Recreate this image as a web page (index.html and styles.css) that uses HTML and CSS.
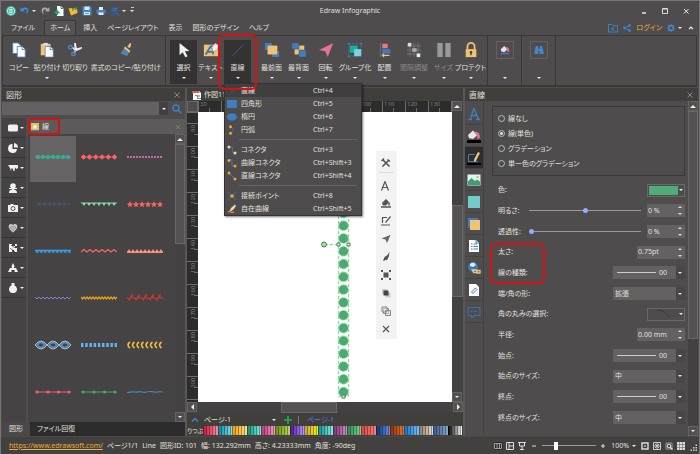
FILE: index.html
```html
<!DOCTYPE html>
<html lang="ja">
<head>
<meta charset="utf-8">
<meta name="viewport" content="width=device-width, initial-scale=1">
<title>Edraw Infographic</title>
<link rel="stylesheet" href="styles.css">
</head>
<body>
<svg width="0" height="0" class="defs" aria-hidden="true">
  <defs>
    <symbol id="undo" viewBox="0 0 10 10"><path d="M.5 1v4.500h4.500L3.500 4C6 2.600 8 4.500 6 8.500 9.500 6 9 1.200 5 1.500 3.800 1.600 2.900 2 2.100 2.700z"/></symbol>
    <symbol id="paint" viewBox="0 0 14 14"><path d="M1 6 6 1.500l4.500 4.500L6 10 2 9z" fill="#e6e6e6"/><path d="M7 3c4-1 6 1 6 6l-2.500 1-1-4z" fill="#e36f94"/></symbol>
    <symbol id="docs" viewBox="0 0 18 18"><path d="M2 1h6l3 3v9H2z" fill="#fff" stroke="#4a7fb5"/><path d="M7 5h6l3 3v9H7z" fill="#fff" stroke="#4a7fb5"/><path d="M12.500 5v3.500H16" fill="none" stroke="#4a7fb5"/></symbol>
  </defs>
</svg>
<div class="app">
  <header class="titlebar">
    <div class="quick">
      <svg class="i10" viewBox="0 0 10 10"><circle cx="5" cy="5" r="5" fill="#3fb5a9"/><circle cx="5" cy="5" r="3.600" fill="none" stroke="#d6f3ef" stroke-width=".8"/><path d="M3 5h4M3.400 3.500h3M3.400 6.500h3" stroke="#fff" stroke-width=".8"/></svg>
      <button aria-label="元に戻す" class="withcaret"><svg class="i10" fill="#3f8ad0"><use href="#undo"/></svg><i class="caret"></i></button>
      <button aria-label="やり直し"><svg class="i10 flip" fill="#a9a9a9"><use href="#undo"/></svg></button>
      <button aria-label="新規"><svg class="i10" viewBox="0 0 10 10"><path d="M3 0h4l2.500 2.500V10H3z" fill="#fff"/><path d="M7 0v2.500h2.500" fill="none" stroke="#3b78b5"/><path d="M.5 6.500h5M3 4v5" stroke="#16a765" stroke-width="1.800"/></svg></button>
      <button aria-label="開く"><svg class="i10" viewBox="0 0 10 10"><path d="M.5 2.500 4 2l1 1.500L9 2 9.500 7 3 9.500z" fill="#f2b93b"/><path d="M4 5c0-3 2-4 3.500-3L8 .500l1.500 3-3 .5.500-1c-1-.3-2 .5-2 2z" fill="#3aa655"/></svg></button>
      <button aria-label="保存"><svg class="i10" viewBox="0 0 10 10"><path d="M.5.500h9v9h-9z" fill="#3f86cc"/><path d="M2.500.500h5v3.500h-5zM2 6h6v3H2z" fill="#dbe8f4"/><path d="M3 7.500h4" stroke="#3f86cc" stroke-width=".8"/></svg></button>
      <button aria-label="印刷"><svg class="i10" viewBox="0 0 10 10"><path d="M.5 3.500h9v4h-9z" fill="#3f86cc"/><path d="M3 1h4v3H3zM2.500 6.500h5V9h-5z" fill="#e4edf6"/></svg></button>
      <button aria-label="エクスポート" class="withcaret"><svg class="i10" viewBox="0 0 10 10"><path d="M1 .500h7.500V6H6v3.500H1z" fill="#36597f"/><path d="M2.500 2.500h4.500M2.500 4.500h4.500" stroke="#5277a0" stroke-width=".7"/><path d="m6.500 7 2.500 2.500" stroke="#4c83be"/></svg><i class="caret"></i></button>
      <button aria-label="カスタマイズ"><i class="caret capped"></i></button>
    </div>
    <h1>Edraw Infographic</h1>
    <div class="winbtns">
      <button aria-label="最小化"><svg class="i8" viewBox="0 0 8 8"><path d="M2 6h4" stroke="#eee" stroke-width="1.400"/></svg></button>
      <button aria-label="最大化"><svg class="i8" viewBox="0 0 8 8"><path d="M1.500 1.500h5v5h-5zM1.500 2h5" fill="none" stroke="#ddd"/></svg></button>
      <button aria-label="閉じる"><svg class="i8" viewBox="0 0 8 8"><path d="m2 2 4.500 4.500m0-4.500L2 6.500" stroke="#eee"/></svg></button>
    </div>
  </header>

  <div class="menubar">
    <nav>
      <a href="#">ファイル</a><a href="#" class="on">ホーム</a><a href="#">挿入</a><a href="#">ページレイアウト</a><a href="#">表示</a><a href="#">図形のデザイン</a><a href="#">ヘルプ</a>
    </nav>
    <div class="account">
      <svg class="i10" viewBox="0 0 10 10" fill="none" stroke="#3f7fc4"><path d="M.5 1.500h3.500l1 1h4.500V9h-9z"/><path d="M6.500 4 3.500 6l3 1.500"/></svg>
      <svg class="i8" viewBox="0 0 8 8" fill="#3f7fc4"><circle cx="1.500" cy="4" r="1.400"/><circle cx="6.500" cy="1.500" r="1.400"/><circle cx="6.500" cy="6.500" r="1.400"/><path d="M6.500 1.500 1.500 4l5 2.500" fill="none" stroke="#3f7fc4"/></svg>
      <a href="#">ログイン</a>
      <button class="withcaret" aria-label="設定"><svg class="i8" viewBox="0 0 8 8"><circle cx="4" cy="4" r="2.300" fill="none" stroke="#3f86cf" stroke-width="1.500"/><path d="M4 0v1.500M4 6.500V8M0 4h1.500M6.500 4H8M1.200 1.200l1 1M5.800 5.800l1 1M1.200 6.800l1-1M5.800 2.200l1-1" stroke="#3f86cf" stroke-width="1.200"/></svg><i class="caret"></i></button>
      <button aria-label="リボンを折りたたむ"><svg class="i8" viewBox="0 0 8 8"><path d="m2 5 2-2 2 2" fill="none" stroke="#eee" stroke-width="1.200"/></svg></button>
    </div>
  </div>

  <div class="ribbon">
    <div class="group">
      <button class="tool"><svg viewBox="0 0 18 18"><use href="#docs"/></svg><span>コピー</span></button>
      <button class="tool"><svg viewBox="0 0 18 18"><path d="M2 2h11v13H2z" fill="#efc375"/><path d="M5 1h5v3H5z" fill="#ddd"/><path d="M7 5h6l3 3v9H7z" fill="#fff" stroke="#4a7fb5" stroke-width=".8"/><path d="M12.500 5v3.500H16" fill="none" stroke="#4a7fb5"/></svg><span>貼り付け</span><i class="caret"></i></button>
      <button class="tool"><svg viewBox="0 0 18 18"><path d="m8 1 2 0 1 6 6-1.500-.5 2L11 10 8.500 9z" fill="#eee"/><path d="m9 9-3-3M9.500 9.500 8 13" stroke="#eee" stroke-width="1.500"/><circle cx="3.800" cy="6" r="2" fill="none" stroke="#4a86c2" stroke-width="1.600"/><circle cx="7.300" cy="13.500" r="2" fill="none" stroke="#4a86c2" stroke-width="1.600"/></svg><span>切り取り</span></button>
      <button class="tool brush"><svg viewBox="0 0 18 18"><path d="m13.500 1 1.500 1-1.500 5-3-2z" fill="#efc375"/><path d="m8 5 6 5-1.500 2L6.500 7z" fill="#efc375"/><path d="m6 7.500 6.500 5L10 16c-3-2-5-3-7.500-2.500C4.500 12 5 10 6 7.500z" fill="#4a86c2"/></svg><span>書式のコピー/貼り付け</span></button>
    </div>
    <div class="group main">
      <button class="tool on"><svg viewBox="0 0 18 18"><path d="m4 1 11 9-5 .5 3 5.500-2.500 1.200-3-5.700L4 15z" fill="#f0f0f0"/></svg><span>選択</span><i class="caret"></i></button>
      <button class="tool"><svg viewBox="0 0 18 18"><path d="M1 3h16v13H1z" fill="#efc375"/><path d="M3 14 8.500 5h2l1 9M5 11h6" fill="none" stroke="#3a74b3" stroke-width="2"/><path d="m10 6 4-5 3 3-1 5-5 2z" fill="#eee" stroke="#777" stroke-width=".5"/></svg><span>テキスト</span><i class="caret"></i></button>
      <div class="drop">
        <button class="tool on" aria-expanded="true"><svg viewBox="0 0 18 18"><path d="M3 15.500 15 3" stroke="#35689c" stroke-width="1"/></svg><span>直線</span><i class="caret"></i></button>
        <ul class="menu">
          <li><button class="hot"><svg viewBox="0 0 10 10"><path d="M1.500 9 8.500 2" stroke="#3c6088"/></svg><span>直線</span><kbd>Ctrl+4</kbd></button></li>
          <li><button><svg viewBox="0 0 10 10"><path d="M0 1h10v8H0z" fill="#3f7dbf"/></svg><span>四角形</span><kbd>Ctrl+5</kbd></button></li>
          <li><button><svg viewBox="0 0 10 10"><ellipse cx="5" cy="5" rx="5" ry="3.800" fill="#3f7dbf"/></svg><span>楕円</span><kbd>Ctrl+6</kbd></button></li>
          <li><button><svg viewBox="0 0 10 10"><path d="M3.500 1.500q6 3.500 0 7" fill="none" stroke="#3f6da3"/><circle cx="3.500" cy="1.800" r="1.500" fill="#f5a623"/><circle cx="3.500" cy="8.200" r="1.500" fill="#f5a623"/></svg><span>円弧</span><kbd>Ctrl+7</kbd></button></li>
          <li class="sep"><button><svg viewBox="0 0 10 10"><path d="M2 2h3.500v6H8" fill="none" stroke="#3f6da3"/><circle cx="2" cy="2" r="1.500" fill="#f7d9a0"/><circle cx="8" cy="8" r="1.500" fill="#f7d9a0"/></svg><span>コネクタ</span><kbd>Ctrl+3</kbd></button></li>
          <li><button><svg viewBox="0 0 10 10"><path d="M2 2C9-1 1 11 8 8" fill="none" stroke="#3f7dbf"/><circle cx="2" cy="2.500" r="1.500" fill="#f5a623"/><circle cx="8" cy="8" r="1.500" fill="#f5a623"/></svg><span>曲線コネクタ</span><kbd>Ctrl+Shift+3</kbd></button></li>
          <li><button><svg viewBox="0 0 10 10"><path d="m2 2 6 6" stroke="#3f7dbf"/><circle cx="2" cy="2" r="1.500" fill="#f5a623"/><circle cx="8" cy="8" r="1.500" fill="#f5a623"/></svg><span>直線コネクタ</span><kbd>Ctrl+Shift+4</kbd></button></li>
          <li class="sep"><button><svg viewBox="0 0 10 10"><path d="m1 1 8 8M9 1 1 9" stroke="#3f6da3"/><circle cx="5" cy="5" r="1.800" fill="#f5a623"/></svg><span>接続ポイント</span><kbd>Ctrl+8</kbd></button></li>
          <li><button><svg viewBox="0 0 10 10"><path d="m2 8 2-4 4-3.500L9 2 6 6z" fill="#efd9a8"/><path d="M1 8c2-2 3 2 6 0" fill="none" stroke="#e8923a" stroke-width="1.200"/></svg><span>自在曲線</span><kbd>Ctrl+Shift+5</kbd></button></li>
        </ul>
        <div class="mark mark-tool"></div>
      </div>
      <div class="tools">
      <button class="tool"><svg viewBox="0 0 18 18"><path d="M1 1h8v8H1zM9 10h8v7H9z" fill="#3f7dbf"/><path d="M4 4h11v10H4z" fill="#efc375"/></svg><span>最前面</span><i class="caret"></i></button>
      <button class="tool"><svg viewBox="0 0 18 18"><path d="M4 4h11v10H4z" fill="#efc375"/><path d="M1 1h8v7H1zM9 9h8v8H9z" fill="#3f7dbf" stroke="#4e4c4c" stroke-width=".6"/></svg><span>最背面</span><i class="caret"></i></button>
      <button class="tool"><svg viewBox="0 0 18 18"><path d="M17 1.500 1 9l7 1.500 3 6.500z" fill="#e27396"/></svg><span>回転</span><i class="caret"></i></button>
      <button class="tool wide"><svg viewBox="0 0 18 18"><path d="M2 2h14v14H2z" fill="none" stroke="#3f7dbf" stroke-dasharray="2 2"/><path d="M3 4h9v8H3z" fill="#14b494"/><path d="M8 8h8v8H8z" fill="#7fd0e6"/><circle cx="16" cy="2" r="1.200" fill="#3f7dbf"/><circle cx="2" cy="2" r="1.200" fill="#3f7dbf"/><circle cx="2" cy="16" r="1.200" fill="#3f7dbf"/></svg><span>グループ化</span><i class="caret"></i></button>
      <button class="tool"><svg viewBox="0 0 18 18"><path d="M4 1v16" stroke="#3f7dbf"/><path d="M6 2h6v5H6z" fill="#ee7886"/><path d="M6 8h9v5H6z" fill="#3f7dbf"/><path d="M14 15H6m2-2-2 2 2 2" fill="none" stroke="#efc375" stroke-width="1.300"/></svg><span>配置</span><i class="caret"></i></button>
      <button class="tool wide dim"><svg viewBox="0 0 18 18"><path d="M4.500 1v16M9 1v16M13.500 1v16M1 4.500h16M1 9h16M1 13.500h16" stroke="#777"/><path d="M2 1h4v4H2z" fill="#ddd"/><path d="M7 7h5v4H7z" fill="#aaa"/><path d="M12 13h4v4h-4z" fill="#eee"/></svg><span>間隔調整</span><i class="caret"></i></button>
      <button class="tool dim"><svg viewBox="0 0 18 18"><path d="M1.500 1h6v16h-6zM10.500 1h6v16h-6z" fill="#9a9a9a"/></svg><span>サイズ</span><i class="caret"></i></button>
      <button class="tool"><svg viewBox="0 0 18 18"><path d="M5 8V5a4 4 0 0 1 8 0v3" fill="none" stroke="#efc375" stroke-width="2"/><path d="M3 8h12v9H3z" fill="#efc375"/><circle cx="9" cy="11.500" r="1.400" fill="#4a3a20"/><path d="M9 12v3" stroke="#4a3a20" stroke-width="1.400"/></svg><span>プロテクト</span><i class="caret"></i></button>
      </div>
    </div>
    <div class="group small"><button class="tool" aria-label="塗りつぶし"><span class="boxed"><svg class="i10" viewBox="0 0 14 14"><use href="#paint"/><path d="M1 11h12v2H1z" fill="#3f7dbf"/></svg></span><i class="caret"></i></button></div>
    <div class="group small"><button class="tool" aria-label="検索と置換"><span class="boxed"><svg class="i10" viewBox="0 0 10 10" fill="#3f86cf"><path d="M2 1h2l.5 2v6H.5V6zM6 1h2l1.500 5v3h-4V3z"/><path d="M4 4h2v2H4z"/></svg></span><i class="caret"></i></button></div>
  </div>

  <main>
    <section class="left">
      <div class="phead"><h2>図形</h2><button aria-label="閉じる"><svg class="i8" viewBox="0 0 8 8"><path d="m1.500 1.500 5 5m0-5-5 5" stroke="#8a8886"/></svg></button></div>
      <div class="search"><input type="text" aria-label="図形を検索"><button class="pick" aria-label="履歴"><i class="caret"></i></button><button aria-label="検索"><svg class="i10" viewBox="0 0 10 10" fill="none" stroke="#3f7fc4" stroke-width="1.400"><circle cx="4" cy="4" r="3"/><path d="m6.200 6.200 3 3"/></svg></button></div>
      <div class="lib">
        <div class="cats">
          <button aria-label="基本"><svg viewBox="0 0 10 10"><rect y="1.500" width="10" height="7" rx="1.500"/></svg><i class="caret"></i></button>
          <button aria-label="グラフ"><svg viewBox="0 0 10 10"><path d="M4.500 1v5H9A4.500 4.500 0 1 1 4.500 1z"/><path d="M6 0a4.200 4.200 0 0 1 4 4.500H6z"/></svg><i class="caret"></i></button>
          <button aria-label="地図"><svg viewBox="0 0 10 10"><path d="M0 2h10v3L8.500 6 7 4.500 6.500 8H5.500L5 6 3.500 5 3 8 2 5z"/></svg><i class="caret"></i></button>
          <button aria-label="人物"><svg viewBox="0 0 10 10"><circle cx="5" cy="3" r="2.800"/><path d="M1 10c0-3 2-3 3-3.500V5h2v1.500c1 .5 3 .5 3 3.500zM1 5h8v1H1z"/></svg><i class="caret"></i></button>
          <button aria-label="カメラ"><svg viewBox="0 0 10 10"><path d="M0 2h2l1-1h2l1 1h4v7H0z"/><circle cx="5" cy="5.500" r="2" fill="none" stroke="#555"/></svg><i class="caret"></i></button>
          <button aria-label="健康"><svg viewBox="0 0 10 10"><path d="M5 9.500C-3 4 2-1 5 2c3-3 8 2 0 7.500z" fill="#ccc"/><path d="M5 7.500C1 4.500 3 2.500 5 4.200 7 2.500 9 4.500 5 7.500z" fill="none" stroke="#666" stroke-width=".7"/></svg><i class="caret"></i></button>
          <button aria-label="装飾"><svg viewBox="0 0 10 10"><path d="M1 1h3v2h3v2h2v4H6V7H4v2H1z"/><path d="m2 5 5 4M3 2l4 3" stroke="#444" stroke-width=".7"/><path d="M7 1h2v2H7z"/></svg><i class="caret"></i></button>
          <button aria-label="自然"><svg viewBox="0 0 10 10"><path d="m5 0 1.500 3L6 5h2l2 4H6.500V7h-3v2H0l2-4h2l-.5-2z"/></svg><i class="caret"></i></button>
          <button aria-label="その他"><svg viewBox="0 0 10 10"><path d="M3.500 0h3v2.500a4 4 0 1 1-3 0z"/></svg><i class="caret"></i></button>
        </div>
        <div class="shelf">
          <div class="shead">
            <svg class="i8" viewBox="0 0 8 8"><path d="M0 0h8v8H0z" fill="#efb75c"/><path d="M0 7h8v1H0z" fill="#3f7dbf"/><path d="m4 1 .7 1.700 1.800.2-1.300 1.200.4 1.900L4 5l-1.600 1 .4-1.900-1.300-1.200 1.800-.2z" fill="#fff"/></svg>
            <span>線</span>
            <button aria-label="閉じる"><svg class="i8" viewBox="0 0 8 8"><path d="m2 2 4 4m0-4L2 6" stroke="#7d7b7a"/></svg></button>
            <div class="mark mark-line"></div>
          </div>
          <div class="shelfbody">
            <div class="shapes">
              <button class="sel" aria-label="線 1"><svg viewBox="0 0 36 10"><g fill="#3da898"><path d="M0 4.500h36v1H0z"/><circle cx="3" cy="5" r="2.200"/><circle cx="8" cy="5" r="2.200"/><circle cx="13" cy="5" r="2.200"/><circle cx="18" cy="5" r="2.200"/><circle cx="23" cy="5" r="2.200"/><circle cx="28" cy="5" r="2.200"/><circle cx="33" cy="5" r="2.200"/></g></svg></button>
              <button aria-label="線 2"><svg viewBox="0 0 36 10"><path d="M1 5h34" stroke="#ff6464" stroke-width=".8"/><path d="m0 5 2.500-2.500L5 5 2.500 7.500zM6 5l2.500-2.500L11 5 8.500 7.500zM12.300 5l2.500-2.500L17.300 5l-2.500 2.500zM18.500 5 21 2.500 23.500 5 21 7.500zM24.800 5l2.500-2.500L29.800 5l-2.500 2.500zM31 5l2.500-2.500L36 5l-2.500 2.500z" fill="#ff6464" stroke="#ff6464" stroke-width=".5"/></svg></button>
              <button aria-label="線 3"><svg viewBox="0 0 36 10"><path d="M0 5h36" stroke="#c667b4" stroke-width="1.800" stroke-dasharray="2 1"/></svg></button>
              <button aria-label="線 4"><svg viewBox="0 0 36 10"><path d="M1 5h34" stroke="#44546e" stroke-width=".8"/><path d="M3 5h31" stroke="#44546e" stroke-width="3" stroke-dasharray="3 2"/></svg></button>
              <button aria-label="線 5"><svg viewBox="0 0 36 10"><path d="M0 3.500h36v1H0zM1 4h4L3 7zM6 4h4L8 7zM11 4h4l-2 3zM16 4h4l-2 3zM21 4h4l-2 3zM26 4h4l-2 3zM31 4h4l-2 3z" fill="#86e0a8"/></svg></button>
              <button aria-label="線 6"><svg viewBox="0 0 36 10"><defs><path id="st" d="m3 2 .9 2.200 2.300.2-1.800 1.500.6 2.300L3 7 1 8.200l.6-2.300L-.200 4.400l2.300-.2z"/></defs><g fill="#ff6464"><use href="#st"/><use href="#st" x="6"/><use href="#st" x="12"/><use href="#st" x="18"/><use href="#st" x="24"/><use href="#st" x="30"/></g></svg></button>
              <button aria-label="線 7"><svg viewBox="0 0 36 10"><path d="M0 4.500h36" stroke="#379ff0" stroke-width="1.600"/><path d="M1 6h35" stroke="#379ff0" stroke-width="1.600" stroke-dasharray="2.500 1.500"/></svg></button>
              <button aria-label="線 8"><svg viewBox="0 0 36 10"><path d="m0 6 3-2.500 3 2.500 3-2.500 3 2.500 3-2.500 3 2.500 3-2.500 3 2.500 3-2.500 3 2.500 3-2.500 3 2.500" fill="none" stroke="#ff6464" stroke-width="1.300"/></svg></button>
              <button aria-label="線 9"><svg viewBox="0 0 36 10"><path d="M0 5.500h36V7H0zM0 6l2-3 2 3 2-3 2 3 2-3 2 3 2-3 2 3 2-3 2 3 2-3 2 3 2-3 2 3 2-3 2 3 2-3 2 3z" fill="#f59478"/></svg></button>
              <button aria-label="線 10"><svg viewBox="0 0 36 10"><path d="m0 4 2 2 2-2 2 2 2-2 2 2 2-2 2 2 2-2 2 2 2-2 2 2 2-2 2 2 2-2 2 2 2-2 2 2 2-2" fill="none" stroke="#9a78d8"/></svg></button>
              <button aria-label="線 11"><svg viewBox="0 0 36 10"><path d="m0 4 1.500 2L3 4l1.500 2L6 4l1.500 2L9 4l1.500 2L12 4l1.500 2L15 4l1.500 2L18 4l1.500 2L21 4l1.500 2L24 4l1.500 2L27 4l1.500 2L30 4l1.500 2L33 4l1.500 2L36 4" fill="none" stroke="#e7a21a" stroke-width="1.300"/></svg></button>
              <button aria-label="線 12"><svg viewBox="0 0 36 10"><path d="M0 5h1l1 2 3-5v3h3l1 2 3-5v3h3l1 2 3-5v3h3l1 2 3-5v3h3l1 2 3-5v3h3" fill="none" stroke="#d8373b" stroke-width="1.100"/></svg></button>
              <button aria-label="線 13"><svg viewBox="0 0 36 10"><defs><g id="eye"><path d="M0 5q6-8 12 0-6 8-12 0z" fill="#56799c" stroke="#a8bccf"/><ellipse cx="6" cy="5" rx="3" ry="2.200" fill="#274b70" stroke="#8fa9c1" stroke-width=".8"/></g></defs><use href="#eye"/><use href="#eye" x="12"/><use href="#eye" x="24"/></svg></button>
              <button aria-label="線 14"><svg viewBox="0 0 36 10"><path d="M0 5h36" stroke="#5ab4f2" stroke-width="4" stroke-dasharray="2.500 1.700"/></svg></button>
              <button aria-label="線 15"><svg viewBox="0 0 36 10"><path d="M3 2q-4 3 0 6M7.500 2q-4 3 0 6M12 2q-4 3 0 6M16.500 2q-4 3 0 6M21 2q-4 3 0 6M25.500 2q-4 3 0 6M30 2q-4 3 0 6M34.500 2q-4 3 0 6" fill="none" stroke="#f5bd42" stroke-width="1.600"/></svg></button>
              <button aria-label="線 16"><svg viewBox="0 0 36 10"><path d="M2 5h32" stroke="#f0607c"/><path d="M2 5h.01M13 5h.01M23.500 5h.01M34 5h.01" stroke="#f0607c" stroke-width="3.200" stroke-linecap="round"/></svg></button>
              <button aria-label="線 17"><svg viewBox="0 0 36 10"><path d="M2 5h32" stroke="#4aa56c"/><path d="M2 5h.01M13 5h.01M23.500 5h.01M34 5h.01" stroke="#4aa56c" stroke-width="3.200" stroke-linecap="round"/></svg></button>
              <button aria-label="線 18"><svg viewBox="0 0 36 10"><path d="M0 5.500c4 0 4-1 8-.5s3-1 7 0 4-.500 8-.5 4 1 7 .5 3-.5 6 0" fill="none" stroke="#4a86b4" stroke-width="1.200"/></svg></button>
            </div>
            <div class="vbar"><button aria-label="上へ"><i class="caret up"></i></button><span class="thumb tall"></span><button aria-label="下へ" class="end"><i class="caret"></i></button></div>
          </div>
        </div>
      </div>
      <div class="ptabs"><button class="on">図形</button><button>ファイル回復</button></div>
    </section>

    <section class="center">
      <div class="phead doctab"><svg class="i10" viewBox="0 0 10 10"><path d="M1 1h6l2 2v7H1z" fill="#fff"/><path d="M0 1h7v2H0z" fill="#e25555"/><path d="M3 5h3v3h3v1H5V6H3z" fill="#3a9ed8"/><path d="M6 5h2v2H6z" fill="#f2a93b"/></svg><span>作図11</span></div>
      <div class="work">
        <div class="corner"></div>
        <div class="hruler"><span>30</span><span></span><span></span><span></span><span></span><span></span><span></span><span>100</span><span>110</span><span>120</span><span>130</span><span></span></div>
        <div class="vbar cbar"><button aria-label="上へ"><i class="caret up"></i></button><span class="thumb mid"></span><button aria-label="下へ" class="end"><i class="caret"></i></button></div>
        <div class="vruler"><span class="half"></span><span>90</span><span>100</span><span>110</span><span>120</span><span>130</span><span>140</span><span>150</span><span>160</span><span>170</span><span>180</span><span>190</span><span>200</span><span></span></div>
        <div class="canvas">
          <svg class="drawing" viewBox="0 0 40 200" aria-label="円の線">
            <defs><pattern id="dots" width="12" height="12.800" patternUnits="userSpaceOnUse" x="18.500" y="8.300"><circle cx="6" cy="6.400" r="5" fill="#4aab72"/></pattern></defs>
            <path d="M18.500 0h12v188.500h-12z" fill="url(#dots)"/>
            <path d="M19.500 0v185.500h10V0M6 33.500h13" fill="none" stroke="#6fee6f" stroke-dasharray="3 2"/>
            <g fill="#e4f7e0" stroke="#4c7a52"><path d="M18 32h3v3h-3zM28 32h3v3h-3zM23 184h3v3h-3z"/><circle cx="5" cy="33.500" r="2.500" fill="#9ee89a"/></g>
          </svg>
          <div class="float">
            <button aria-label="ツール"><svg viewBox="0 0 10 10"><path d="m2 2 6.500 6.500M8 2 1.500 8.500" stroke="#555" stroke-width="1.700"/><path d="M.5 3 3 .500M6.500 1.500l2.500 2" stroke="#555" stroke-width="1.500"/></svg></button>
            <button class="cut" aria-label="文字"><svg viewBox="0 0 10 10"><path d="M1.500 9.500 5 .500l3.500 9M2.800 6.500h4.400" fill="none" stroke="#555" stroke-width="1.200"/></svg></button>
            <button aria-label="塗り"><svg viewBox="0 0 10 10"><path d="m1 5 4-4 3 3-3 3.500H2z" fill="#555"/><path d="M8 4.500v3M0 9h10" stroke="#555" stroke-width="1.500"/></svg></button>
            <button aria-label="線の色"><svg viewBox="0 0 10 10"><path d="M6 1.500H1.500V7M0 9h9M9.500.500 4.500 6.500" fill="none" stroke="#555" stroke-width="1.200"/></svg></button>
            <button aria-label="回転"><svg viewBox="0 0 10 10"><path d="M9.500 1 .500 4.500l4 1 1.500 3.500z" fill="#666"/></svg></button>
            <button aria-label="書式"><svg viewBox="0 0 10 10"><path d="m8.500 0-2 3-3 2L2 9l4.500-1.500L8 4z" fill="#555"/></svg></button>
            <button aria-label="グループ"><svg viewBox="0 0 10 10"><path d="M2.500 2.500h5v5h-5zM0 0h2v2H0zM8 0h2v2H8zM0 8h2v2H0zM8 8h2v2H8z" fill="#555"/></svg></button>
            <button aria-label="前面"><svg viewBox="0 0 10 10"><path d="M1 1h5v5H1zM4.500 4.500h5v5h-5z" fill="#ccc"/><path d="M2.500 2.500h5v5h-5z" fill="#444"/></svg></button>
            <button aria-label="背面"><svg viewBox="0 0 10 10" stroke="#888" fill="#fff"><path d="M2.500 2.500h5v5h-5z"/><path d="M1 1h5v5H1zM4.500 4.500h5v5h-5z" fill="#ddd" fill-opacity=".6"/></svg></button>
            <button aria-label="閉じる"><svg viewBox="0 0 10 10"><path d="m2 2 6 6m0-6L2 8" stroke="#555" stroke-width="1.200"/></svg></button>
          </div>
        </div>
        <div class="hbar"><button aria-label="左へ"><i class="caret lt"></i></button><span class="thumb"></span><button aria-label="右へ" class="end"><i class="caret rt"></i></button></div>
      </div>
      <div class="pages">
        <svg class="i8" viewBox="0 0 8 8"><path d="m1 5.500 3-3 3 3" fill="none" stroke="#3f86cf" stroke-width="1.500"/></svg>
        <button class="pagesel"><span>ページ-1</span><i class="caret"></i></button>
        <button class="plus" aria-label="ページを追加"><svg class="i8" viewBox="0 0 8 8"><path d="M4 0v8M0 4h8" stroke="#22b35b" stroke-width="1.500"/></svg></button>
        <a href="#">ページ-1</a>
      </div>
      <div class="palette"><span>りつぶ</span>
        <i class="c1"></i><i class="c2"></i><i class="c3"></i><i class="c4"></i><i class="c5"></i><i class="c6"></i><i class="c7"></i><i class="c8"></i><i class="c9"></i><i class="c10"></i><i class="c11"></i><i class="c12"></i><i class="c13"></i><i class="c14"></i><i class="c15"></i><i class="c16"></i><i class="c17"></i><i class="c18"></i>
      </div>
    </section>

    <section class="right">
      <div class="phead"><h2>直線</h2><button aria-label="閉じる"><svg class="i8" viewBox="0 0 8 8"><path d="m1.500 1.500 5 5m0-5-5 5" stroke="#8a8886"/></svg></button></div>
      <div class="props">
        <div class="ptools">
          <button aria-label="文字"><svg viewBox="0 0 14 14"><path d="m3 12.500 4-11 4.500 11M4.500 8.500h5M1.500 12.500h3.500M9 12.500h4" fill="none" stroke="#3f7fc4" stroke-width="1.300"/></svg></button>
          <button aria-label="塗り"><svg viewBox="0 0 14 14"><use href="#paint"/><path d="M0 11h14v3H0z" fill="#000"/></svg></button>
          <button class="on" aria-label="線"><svg viewBox="0 0 14 14"><path d="M8 3.500H1.500v7h9" fill="none" stroke="#3f7fc4"/><path d="m11 1 2 1-4 8-2 1v-2.500z" fill="#efc375"/><path d="M0 12h14v2H0z" fill="#000"/></svg></button>
          <button aria-label="画像"><svg viewBox="0 0 14 14"><path d="M.5 1.500h13v11H.5z" fill="#e3f3f7"/><path d="M1 8.500 4.500 5 8 8l2-1.500 3 2V12H1z" fill="#3e9e6e"/><circle cx="10.500" cy="4" r="1.200" fill="#f2b93b"/></svg></button>
          <button aria-label="図形"><svg viewBox="0 0 14 14"><path d="M1 1h12v12H1z" fill="#72cbc8"/></svg></button>
          <button aria-label="影"><svg viewBox="0 0 14 14"><path d="M1 1h10v10H1z" fill="#3f7dbf"/><path d="M3 3h10v10H3z" fill="#efc375"/></svg></button>
          <button aria-label="文書"><svg viewBox="0 0 14 14"><path d="M2 1h7l3 3v9H2z" fill="#fff"/><path d="M9 1v3h3M4 5h1.500M4 7.500h1.500M4 10h1.500M6.500 5H10M6.500 7.500H11M6.500 10H11" fill="none" stroke="#3f7fc4"/></svg></button>
          <button aria-label="リンク"><svg viewBox="0 0 14 14"><circle cx="6" cy="6" r="5" fill="#3a78b8"/><path d="M3 3q4-3 6 1L6 6 3 5zM4 8l3 1-1 2z" fill="#e2edf5"/><path d="M6.500 9h3v2.500h-3zM10 9.500h3V12h-3z" fill="none" stroke="#efc375" stroke-width="1.300"/></svg></button>
          <button aria-label="添付"><svg viewBox="0 0 14 14"><path d="M2 1h7l3 3v9H2z" fill="#fff"/><path d="m4.500 9 4-4 1.500 1.500-4 4L4.500 9z" fill="none" stroke="#3f7fc4"/></svg></button>
          <button aria-label="コメント"><svg viewBox="0 0 14 14"><path d="M2 2.500h10q1 0 1 1v6q0 1-1 1H7L4.500 13v-2.500H2q-1 0-1-1v-6q0-1 1-1z" fill="none" stroke="#3f6fa8" stroke-width="1.100"/><path d="M4 6.500h6" stroke="#3f6fa8" stroke-width="1.300" stroke-dasharray="1.300 1"/></svg></button>
        </div>
        <form class="form">
          <fieldset>
            <label><input type="radio" name="kind">線なし</label>
            <label><input type="radio" name="kind" checked>線(単色)</label>
            <label><input type="radio" name="kind">グラデーション</label>
            <label><input type="radio" name="kind">単一色のグラデーション</label>
          </fieldset>
          <div class="rows">
            <div class="row"><label for="col">色:</label><button type="button" id="col" class="swatch"><span></span><i class="caret"></i></button></div>
            <div class="row"><label for="bri">明るさ:</label><input type="range" id="bri" value="50"><span class="spin"><input type="text" value="0 %" aria-label="明るさの値"><i></i></span></div>
            <div class="row"><label for="opa">透過性:</label><input type="range" id="opa" value="0"><span class="spin"><input type="text" value="0 %" aria-label="透過性の値"><i></i></span></div>
            <div class="row"><label for="wid">太さ:</label><span class="spin broad"><input type="text" id="wid" value="0.75pt"><i></i></span></div>
            <div class="row"><label for="typ">線の種類:</label><button type="button" id="typ" class="combo"><span class="stroke"></span>00<i class="caret"></i></button></div>
            <div class="row"><label for="cap">端/角の形:</label><span class="combo sel"><select id="cap"><option>拡張</option></select><i class="caret"></i></span></div>
            <div class="row"><label for="rou">角の丸みの選択:</label><button type="button" id="rou" class="swatch"><svg viewBox="0 0 28 10"><path d="M8 1q9 0 12 8" fill="none" stroke="#3a3939"/></svg><i class="caret"></i></button></div>
            <div class="row"><label for="rad">半径:</label><span class="spin broad"><input type="text" id="rad" value="0.00 mm"><i></i></span></div>
            <div class="row"><label for="beg">始点:</label><button type="button" id="beg" class="combo"><span class="stroke"></span>00<i class="caret"></i></button></div>
            <div class="row"><label for="bsz">始点のサイズ:</label><span class="combo sel"><select id="bsz"><option>中</option></select><i class="caret"></i></span></div>
            <div class="row"><label for="end">終点:</label><button type="button" id="end" class="combo"><span class="stroke"></span>00<i class="caret"></i></button></div>
            <div class="row"><label for="esz">終点のサイズ:</label><span class="combo sel"><select id="esz"><option>中</option></select><i class="caret"></i></span></div>
            <div class="mark mark-rows"></div>
          </div>
        </form>
        <div class="vbar"><button aria-label="上へ"><i class="caret up"></i></button><span class="thumb long"></span><button aria-label="下へ" class="end"><i class="caret"></i></button></div>
      </div>
    </section>
  </main>

  <footer class="status">
    <a href="https://www.edrawsoft.com/">https://www.edrawsoft.com/</a>
    <span>ページ1/1</span><span>Line</span><span>図形ID: 101</span><span>幅: 132.292mm</span><span>高さ: 4.23333mm</span><span>角度: -90deg</span>
    <div class="view">
      <button class="on" aria-label="標準"><svg class="i8" viewBox="0 0 8 8"><path d="M.5 1.500h7v5h-7zM3 1.500v5M5.500 1.500v5" fill="none" stroke="#bbb" stroke-width=".8"/></svg></button>
      <button aria-label="アウトライン"><svg class="i8" viewBox="0 0 8 8"><path d="M.5.500h7v7h-7zM3 .500v7M3 4h4.500" fill="none" stroke="#ddd"/></svg></button>
      <button aria-label="プレゼン"><svg class="i8" viewBox="0 0 8 8"><path d="M0 .500h8M1.500.500v3.500h5V.500M4 4v3M2 7.500h4" fill="none" stroke="#ddd"/></svg></button>
      <button aria-label="縮小"><svg class="i8" viewBox="0 0 8 8"><path d="M2 4h4" stroke="#ddd"/></svg></button>
      <input type="range" aria-label="ズーム" value="23" class="zoom">
      <button aria-label="拡大"><svg class="i8" viewBox="0 0 8 8"><path d="M2 4h4M4 2v4" stroke="#ddd"/></svg></button>
      <button class="withcaret pct">100%<i class="caret"></i></button>
      <button aria-label="ページ全体"><svg class="i8" viewBox="0 0 8 8"><path d="M1 1h6v6H1z" fill="none" stroke="#ddd" stroke-width="1.400"/><path d="M3 3h2v2H3z" fill="#999"/></svg></button>
      <button aria-label="幅に合わせる"><svg class="i8" viewBox="0 0 8 8"><path d="M.5.500h7v7h-7zM4 .500v7M.5 4h7M2 2l4 4M6 2 2 6" fill="none" stroke="#ccc"/></svg></button>
      <button aria-label="拡大鏡"><svg class="i8" viewBox="0 0 8 8"><path d="M1 1h6v6H1z" fill="none" stroke="#999"/><circle cx="4" cy="4" r="1.800" fill="none" stroke="#eee"/><path d="m5.500 5.500 2 2" stroke="#eee" stroke-width="1.200"/></svg></button>
      <button aria-label="グリッド"><svg class="i8" viewBox="0 0 8 8"><path d="M0 0h8v8H0z" fill="#ddd"/><path d="M2.500 0v8M5.500 0v8M0 2.500h8M0 5.500h8" stroke="#555" stroke-width=".5"/></svg></button>
      <svg class="i8 grip" viewBox="0 0 8 8"><path d="M5.500 1.500h1.500v1.500H5.500zM3 4h1.500v1.500H3zM5.500 4h1.500v1.500H5.500zM.5 6.500H2V8H.5zM3 6.500h1.500V8H3zM5.500 6.500h1.500V8H5.500z" fill="#ccc"/></svg>
    </div>
  </footer>
</div>
</body>
</html>
```
FILE: styles.css
```css
:root {
  --base: #4e4c4c;
  --panel: #454343;
  --head: #403f3b;
  --field: #636161;
  --deep: #2d2c2c;
  --line: #3a3838;
  --edge: #656362;
  --text: #e2e0de;
  --gold: #e5ae3c;
  --red: #d81010;
}
* { box-sizing: border-box; }
body {
  margin: 0;
  background: var(--base);
  color: var(--text);
  font: 7px/10px "Noto Sans", "Noto Sans CJK JP", sans-serif;
  font-feature-settings: "palt";
  white-space: nowrap;
}
button, input, select { font: inherit; font-feature-settings: inherit; color: inherit; background: none; border: 0; padding: 0; margin: 0; border-radius: 0; appearance: none; outline: none; min-width: 0; }
a { color: inherit; text-decoration: none; }
h1, h2 { margin: 0; font-weight: 400; font-size: 7px; }
h2 { font-size: 8px; }
svg { display: block; flex: none; }
.defs { position: absolute; }
.i8 { width: 8px; height: 8px; }
.i10 { width: 10px; height: 10px; }
.flip { transform: scaleX(-1); }

.caret { display: block; flex: none; width: 0; height: 0; border: 2px solid transparent; border-top-color: #eee; border-bottom-width: 0; }
.caret.up { border-width: 0 3px 3px; border-bottom-color: #eee; }
.caret.lt { border-width: 3px 3px 3px 0; border-color: transparent #eee; }
.caret.rt { border-width: 3px 0 3px 3px; border-color: transparent #eee; }
.capped { position: relative; }
.capped::before { content: ""; position: absolute; top: -5px; left: -1px; width: 3px; height: 1px; background: #ccc; }
.withcaret { display: flex; align-items: center; gap: 3px; }

.mark { position: absolute; border: 2px solid var(--red); border-radius: 6px; pointer-events: none; z-index: 5; }

.app { display: flex; flex-direction: column; min-height: 100vh; border: solid #777574; border-width: 1px 1px 0; }

.titlebar { display: grid; grid-template-columns: 1fr auto 1fr; align-items: center; height: 19px; padding: 0 5px; }
.quick { display: flex; align-items: center; gap: 4px; }
.quick .withcaret { gap: 2px; }
.winbtns { display: flex; justify-content: flex-end; gap: 13px; padding-right: 4px; }

.menubar { display: flex; justify-content: space-between; height: 15px; padding-left: 5px; }
.menubar nav { display: flex; }
.menubar nav a { padding: 3px 5px 0; }
.menubar nav a:first-child { padding-right: 7px; }
.menubar nav .on { margin: 0 2px; border: 1px solid var(--line); border-bottom: 0; background: #555353; padding-top: 2px; }
.account { display: flex; align-items: center; gap: 5px; padding-right: 4px; }
.account a { color: var(--gold); }

.ribbon { display: flex; height: 52px; margin: 0 2px 0 1px; border: 1px solid var(--line); border-bottom-width: 2px; }
.group { display: flex; padding: 4px 3px 2px 2px; border-right: 1px solid #393737; }
.main { padding: 4px 3px 2px 4px; }
.tools { display: flex; padding-left: 7px; }
.tool { display: flex; flex-direction: column; align-items: center; width: 27px; height: 44px; padding-top: 2px; }
.tool > svg { width: 16px; height: 16px; }
.tool > span { margin: 5px 0; line-height: 9px; }
.tool.on { background: #343232; }
.group:first-child .tool { width: 28px; }
.group:first-child .brush { width: 73px; }
.tool.wide { width: 32px; }
.dim span { color: #8b8988; }
.small { padding: 4px 3px 2px; }
.tool > .boxed { display: flex; align-items: center; justify-content: center; width: 18px; height: 18px; margin: -1px 0 18px; border: 1px solid #636161; }

.drop { position: relative; }
.menu { position: absolute; z-index: 4; top: 100%; left: 0; width: 138px; margin: 0; padding: 0; list-style: none; background: var(--base); border: 1px solid #343232; box-shadow: 1px 1px 2px #0008; }
.menu button { display: grid; grid-template-columns: 10px 68px 1fr; column-gap: 4px; align-items: center; width: 100%; height: 13px; padding-left: 2px; text-align: left; }
.menu .hot { background: #403e3e; }
.menu svg { width: 10px; height: 10px; }
.menu kbd { font: inherit; }
.menu .sep { padding-top: 7px; background: linear-gradient(#686665, #686665) 14px 3px / 118px 1px no-repeat; }
.mark-tool { inset: -6px -6px -7px; }

main { flex: 1; display: grid; grid-template-columns: 186px minmax(0, 1fr) 236px; background: var(--head); margin-top: 1px; }
main > section { display: flex; flex-direction: column; min-width: 0; }
.phead { display: flex; align-items: center; justify-content: space-between; height: 13px; padding: 0 4px; background: var(--head); }

.left { padding-left: 1px; border-right: 2px solid #5a5857; background: var(--base); }
.search { display: flex; align-items: center; height: 17px; padding-bottom: 2px; }
.search input { flex: 1; height: 13px; background: var(--field); }
.search .pick { display: flex; align-items: center; justify-content: center; width: 9px; height: 13px; background: #424040; margin-right: 4px; }
.search button:last-child { padding-right: 3px; }
.lib { flex: 1; display: flex; }
.cats { width: 24px; background: var(--panel); }
.cats button { display: flex; align-items: center; justify-content: flex-end; gap: 2px; width: 100%; height: 20px; padding-right: 2px; border-bottom: 1px solid #353333; fill: #f2f2f2; }
.cats svg { width: 10px; height: 10px; }
.shelf { flex: 1; display: flex; flex-direction: column; border-left: 2px solid #504e4e; margin-top: 1px; }
.shead { position: relative; display: flex; align-items: center; gap: 3px; height: 15px; padding: 0 3px; background: #5d5b5a; }
.shead button { margin-left: auto; }
.mark-line { left: 0; top: -1px; width: 32px; height: 17px; border-radius: 4px; }
.shelfbody { flex: 1; display: flex; background: var(--panel); }
.shapes { flex: 1; display: grid; grid-template-columns: repeat(3, 1fr); grid-auto-rows: 47px; padding: 2px 7px 0 2px; }
.shapes button { padding: 0 0 6px; }
.shapes svg { width: 36px; height: 10px; margin: 0 auto; }
.shapes .sel { background: linear-gradient(#656363, #656363) 0 0 / 100% 46px no-repeat; }
.ptabs { display: flex; height: 14px; background: var(--deep); }
.ptabs button { padding: 0 7px; }
.ptabs .on { background: #4a4848; }

.vbar { display: flex; flex-direction: column; width: 10px; background: #434141; }
.vbar button, .hbar button { display: flex; flex: none; align-items: center; justify-content: center; width: 10px; height: 10px; background: #514f4f; border: 1px solid var(--edge); }
.thumb { border: 1px solid #6a6867; background: #545252; }
.tall { height: 100px; }
.long { height: 228px; }
.vbar .end { margin-top: auto; }
.hbar .end { margin-left: auto; }

.center { background: var(--head); }
.doctab { justify-content: flex-start; gap: 2px; padding: 0 5px; }
.work { flex: 1; display: grid; grid-template-columns: 11px minmax(0, 1fr) 11px; grid-template-rows: 11px 1fr 11px; background: #474545; }
.corner { background: var(--base); border: 1px solid #6a6867; }
.hruler, .vruler { display: flex; overflow: hidden; background: var(--deep); color: #807e7d; font-size: 6px; line-height: 7px; }
.hruler span { flex: none; width: 23px; padding-left: 1px; border-left: 1px solid #6f6d6c; background: linear-gradient(#6f6d6c, #6f6d6c) 10px 100% / 1px 4px no-repeat; }
.vruler { grid-row: 2; grid-column: 1; flex-direction: column; }
.vruler span { flex: none; width: 11px; height: 23px; padding: 1px 3px; writing-mode: vertical-rl; transform: rotate(180deg); text-align: right; border-bottom: 1px solid #6f6d6c; background: linear-gradient(#6f6d6c, #6f6d6c) 0 11px / 4px 1px no-repeat; }
.vruler .half { height: 11px; }
.vruler span:last-child { flex: 0 1 3px; height: auto; min-height: 0; padding: 0; background: none; }
.mid { height: 92px; margin-top: 94px; }
.canvas { grid-row: 2; grid-column: 2; position: relative; background: #fff; }
.cbar { grid-row: 1 / 3; grid-column: 3; width: 11px; }
.drawing { position: absolute; left: 121px; top: 99px; width: 40px; height: 200px; }
.float { position: absolute; left: 178px; top: 39px; width: 21px; padding: 3px 0 1px; background: #f3f3f3; }
.float button { display: flex; align-items: center; justify-content: center; width: 19px; height: 18px; }
.float svg { width: 10px; height: 10px; }
.float .cut { width: 15px; margin: 0 3px; padding: 4px 4px 0 0; height: 22px; border-top: 1px solid #ddd; }
.hbar { grid-row: 3; grid-column: 1 / 4; display: flex; background: #434141; }
.hbar .thumb { width: 56px; margin-left: 84px; }

.pages { display: flex; align-items: center; height: 13px; padding-left: 4px; }
.pagesel { display: flex; align-items: center; justify-content: space-between; width: 72px; margin-left: 5px; text-align: left; }
.plus { margin-left: 8px; padding-right: 6px; border-right: 1px solid #777; }
.pages a { margin-left: 8px; color: #4f7cf0; }
.palette { display: flex; height: 10px; padding-right: 1px; }
.palette span { flex: none; min-width: 16px; font-size: 6px; }
.palette i { flex: 1; height: 9px; background: repeating-linear-gradient(90deg, #0005 0 1px, transparent 1px 3px), linear-gradient(90deg, var(--a), var(--b)); }
.c1 { --a: #c3143c; --b: #ff8c9b; } .c2 { --a: #10829a; --b: #7fe0ef; } .c3 { --a: #f09a10; --b: #ffdf80; }
.c4 { --a: #0c8c78; --b: #7ff0d8; } .c5 { --a: #b8327c; --b: #f79acb; } .c6 { --a: #6a8a10; --b: #b8dc50; }
.c7 { --a: #4c10a0; --b: #b898f8; } .c8 { --a: #b89868; --b: #fff000; } .c9 { --a: #0c8c8c; --b: #80f0e8; }
.c10 { --a: #783070; --b: #d888c8; } .c11 { --a: #2c8448; --b: #78d898; } .c12 { --a: #d84040; --b: #ff8078; }
.c13 { --a: #103078; --b: #6890e0; } .c14 { --a: #902c08; --b: #e07838; } .c15 { --a: #1870b8; --b: #70c0ff; }
.c16 { --a: #887868; --b: #e8dccc; } .c17 { --a: #385888; --b: #88a8cc; } .c18 { --a: #000; --b: #fff; }

.right { padding-right: 1px; border-left: 2px solid #5a5857; background: var(--base); }
.props { flex: 1; display: flex; }
.ptools { width: 19px; padding-top: 2px; border-right: 1px solid #434141; }
.ptools button { display: flex; align-items: center; justify-content: center; width: 100%; height: 22px; border-bottom: 1px solid #434141; }
.ptools .on { background: #2f2d2d; }
.ptools svg { width: 14px; height: 14px; }
.form { flex: 1; min-width: 0; display: flex; flex-direction: column; padding: 5px 3px 8px 8px; }
fieldset { margin: 0; padding: 4px 5px; border: 1px solid #3a3838; }
fieldset label { display: flex; align-items: center; gap: 3px; height: 15px; }
fieldset input { width: 7px; height: 7px; border: 1px solid #bbb; border-radius: 50%; }
fieldset input:checked { background: radial-gradient(#ddd 0 1px, transparent 2px); }
.rows { flex: 1; position: relative; display: grid; grid-auto-rows: 1fr; padding: 4px 0 0 6px; }
.row { display: flex; align-items: center; justify-content: flex-end; }
.row > label { margin-right: auto; }
.mark-rows { left: -2px; top: 67px; width: 55px; height: 41px; }
.spin { display: flex; align-items: center; width: 38px; height: 13px; background: var(--field); }
.spin.broad { width: 48px; }
.spin input { flex: 1; padding-left: 1px; }
.spin > i { position: relative; width: 9px; height: 9px; }
.spin > i::before, .spin > i::after { content: ""; position: absolute; left: 2px; border: 2px solid transparent; }
.spin > i::before { top: 0; border-top-width: 0; border-bottom-color: #ddd; }
.spin > i::after { bottom: 0; border-bottom-width: 0; border-top-color: #ddd; }
.combo { position: relative; display: flex; align-items: center; justify-content: flex-end; gap: 3px; width: 72px; height: 13px; padding-right: 3px; background: linear-gradient(90deg, var(--field) 63px, #484646 63px); }
.combo .caret { margin-left: 8px; }
.combo .stroke { width: 39px; height: 1px; background: #ccc; }
.combo select { flex: 1; padding-left: 2px; height: 13px; }
.swatch { display: flex; align-items: center; justify-content: space-between; width: 38px; height: 13px; padding: 1px; border: 1px solid #6b6968; }
.swatch span { width: 29px; height: 9px; background: #4fae77; }
.swatch svg { width: 28px; height: 10px; }
input[type="range"] { width: 112px; height: 8px; margin-right: 6px; background: linear-gradient(#999, #999) 0 50% / 100% 1px no-repeat; }
input[type="range"]::-webkit-slider-thumb { appearance: none; width: 5px; height: 5px; border-radius: 50%; background: #8fb0fa; }

.status { display: flex; align-items: center; gap: 4px; height: 20px; padding: 0 1px 2px 8px; background: #434140; border-top: 1px solid #4c4a49; }
.status > a { color: var(--gold); text-decoration: underline; }
.view { display: flex; align-items: center; gap: 3px; margin-left: auto; }
.view button { display: flex; align-items: center; min-width: 9px; }
.view .on { background: #2c2a2a; }
.view .zoom { width: 54px; margin: 0; }
.view .zoom::-webkit-slider-thumb { width: 4px; height: 8px; border-radius: 0; background: #fff; }
.view .pct { margin-right: 2px; }
.grip { align-self: flex-end; margin-left: 1px; }
```
